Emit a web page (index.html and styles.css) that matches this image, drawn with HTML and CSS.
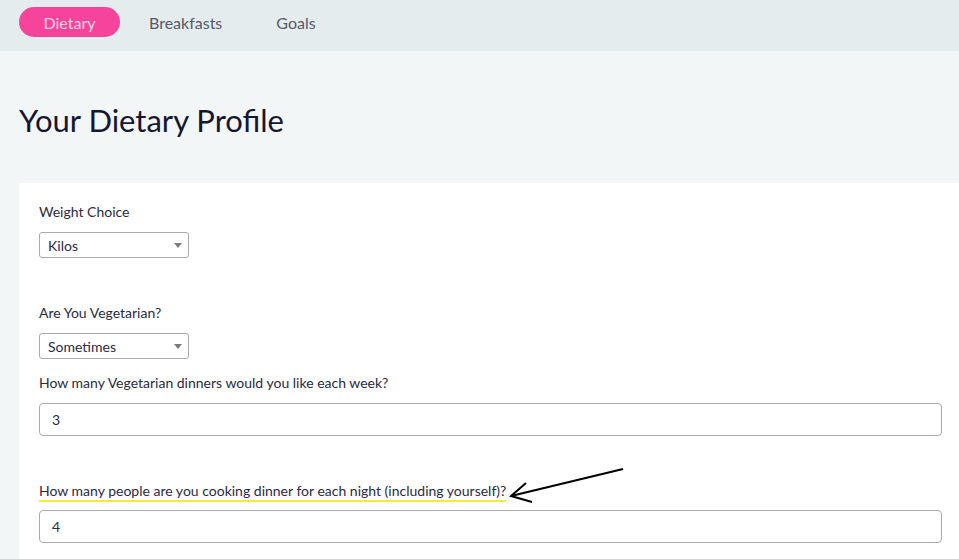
FILE: index.html
```html
<!DOCTYPE html>
<html lang="en">
<head>
    <meta charset="UTF-8">
    <meta name="viewport" content="width=device-width, initial-scale=1.0">
    <title>Your Dietary Profile</title>
    <link rel="stylesheet" href="styles.css">
</head>
<body>
    <div class="tabs">
        <a class="tab active" href="#">Dietary</a>
        <a class="tab" href="#">Breakfasts</a>
        <a class="tab" href="#">Goals</a>
    </div>

    <div class="page">
        <h1>Your Dietary Profile</h1>

        <div class="card">
            <div class="field">
                <label>Weight Choice</label>
                <div class="select-wrap">
                    <select>
                        <option>Kilos</option>
                        <option>Pounds</option>
                    </select>
                </div>
            </div>

            <div class="field">
                <label>Are You Vegetarian?</label>
                <div class="select-wrap">
                    <select>
                        <option>Sometimes</option>
                        <option>Yes</option>
                        <option>No</option>
                    </select>
                </div>
            </div>

            <div class="field">
                <label>How many Vegetarian dinners would you like each week?</label>
                <input type="text" value="3">
            </div>

            <div class="field">
                <div class="label-row">
                    <label class="marked">How many people are you cooking dinner for each night (including yourself)?</label>
                    <!-- hand drawn pointer -->
                    <svg class="pointer" width="130" height="40" viewBox="0 0 130 40">
                        <path d="M119 2 L7 29" stroke="#000" stroke-width="2" fill="none"/>
                        <path d="M22 16 L7 29 L28 35" stroke="#000" stroke-width="2" fill="none"/>
                    </svg>
                </div>
                <input type="text" value="4">
            </div>
        </div>
    </div>
</body>
</html>
```

FILE: styles.css
```css
* {
    margin: 0;
    padding: 0;
    box-sizing: border-box;
}
body {
    font-family: Lato, "Open Sans", sans-serif;
    background-color: #f3f6f7;
    color: #23233d;
    overflow: hidden;
}

/* tabs */
.tabs {
    height: 51px;
    background-color: #e5ecee;
    display: flex;
    align-items: flex-start;
    padding: 7px 0 0 19px;
}
.tab {
    display: flex;
    align-items: center;
    justify-content: center;
    height: 30px;
    padding: 0 27px;
    border-radius: 15px;
    font-size: 16px;
    color: #575968;
    text-decoration: none;
}
.tab.active {
    background-color: #f6449b;
    color: #fbd2e6;
    width: 101px;
    margin-right: 2px;
}

/* content */
.page {
    padding-left: 19px;
}
.page h1 {
    font-size: 31px;
    font-weight: 400;
    color: #161630;
    padding-top: 50px;
    height: 132px;
}
.card {
    background-color: #fff;
    padding: 19px 18px 20px 20px;
}
.field {
    margin-bottom: 45px;
}
.field:nth-child(2) {
    margin-bottom: 14px;
}
.field label {
    display: block;
    width: fit-content;
    font-size: 14px;
    line-height: 20px;
    margin-bottom: 10px;
    color: #2a2a45;
}
.label-row {
    position: relative;
}
.field label.marked {
    border-bottom: 2px solid #f5ec3a;
    line-height: 19px;
    margin-bottom: 8px;
}
.pointer {
    position: absolute;
    left: 465px;
    top: -14px;
}
.select-wrap {
    position: relative;
    width: 150px;
}
.select-wrap::after {
    content: '';
    position: absolute;
    right: 7px;
    top: 11px;
    border-left: 4px solid transparent;
    border-right: 4px solid transparent;
    border-top: 5px solid #7b7b7b;
    pointer-events: none;
}
select {
    appearance: none;
    -webkit-appearance: none;
    display: block;
    width: 100%;
    height: 26px;
    border: 1px solid #aaa;
    border-radius: 3px;
    background-color: #fff;
    padding: 0 8px;
    font-family: inherit;
    font-size: 14px;
    color: #2a2a45;
}
input {
    display: block;
    width: 903px;
    height: 33px;
    border: 1px solid #a9a6bd;
    border-radius: 4px;
    padding: 0 12px;
    font-family: inherit;
    font-size: 14px;
    color: #2a2a45;
}
input:focus, select:focus {
    outline: none;
}
```
